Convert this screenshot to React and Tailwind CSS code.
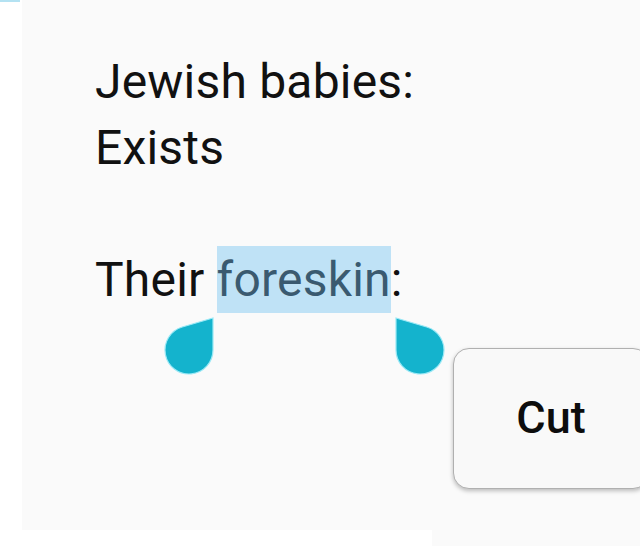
import React from "react";

function Handle({ flip = false, className = "" }) {
  return (
    <svg
      width="48"
      height="56"
      viewBox="0 0 48 56"
      className={className}
      style={{ transform: flip ? "scaleX(-1)" : undefined, overflow: "visible" }}
    >
      <path
        d="M48 0 L48 32 A24 24 0 1 1 17.28 8.96 Z"
        fill="#14b3cd"
        stroke="#9ae9f6"
        strokeWidth="1.2"
      />
    </svg>
  );
}

export default function App() {
  return (
    <div className="relative w-[640px] h-[546px] overflow-hidden bg-white font-['Roboto',sans-serif] flex flex-col">
      {/* page */}
      <div className="flex h-[530px]">
        <div className="w-[22px] shrink-0 flex flex-col">
          <div className="w-[20px] h-[2px] bg-[#b4e2f2]" />
        </div>
        <div className="flex-1 bg-[#fafafa] pt-[49px] pl-[73px]">
          <div className="text-[48px] leading-[66px] text-[#111111] tracking-[0.2px]">
            <p>Jewish babies:</p>
            <p>Exists</p>
            <p>&nbsp;</p>
            <p>
              Their{" "}
              <span className="bg-[#bfe2f6] text-[#3a5a70] py-[5px]">foreskin</span>:
            </p>
          </div>
        </div>
      </div>
      <div className="flex flex-1">
        <div className="w-[432px] bg-white" />
        <div className="flex-1 bg-[#fafafa]" />
      </div>

      {/* selection handles */}
      <Handle className="absolute left-[165px] top-[318px]" />
      <Handle flip className="absolute left-[396px] top-[318px]" />

      {/* context menu */}
      <div className="absolute left-[453px] top-[348px] w-[196px] h-[141px] rounded-[16px] border border-[#b0b0b0] bg-[#f9f9f9] shadow-[0_2px_4px_rgba(0,0,0,0.25)] flex items-center justify-center">
        <span className="text-[45px] font-medium text-[#0d0d0d] -mt-[2px]">Cut</span>
      </div>
    </div>
  );
}
